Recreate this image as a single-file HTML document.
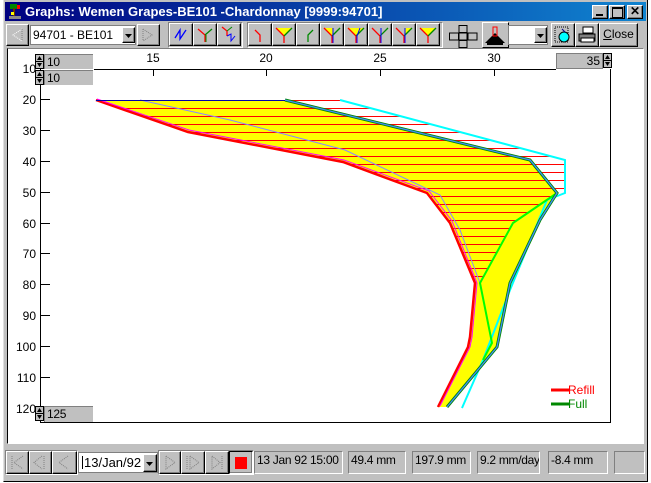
<!DOCTYPE html>
<html><head><style>
body{margin:0;width:651px;height:483px;overflow:hidden;background:#fff;font-family:"Liberation Sans",sans-serif;font-size:12px;position:relative}
.a{position:absolute}
.win{left:3px;top:0;width:645px;height:482px;background:#c0c0c0;border-right:1px solid #000;border-bottom:1px solid #000;box-sizing:border-box;border-left:1px solid #dfdfdf}
.title{left:5px;top:2px;width:641px;height:19px;background:linear-gradient(90deg,#000080,#1084d0);color:#fff;font-weight:bold;font-size:13px;line-height:19px}
.btn{position:absolute;background:#c0c0c0;border:1px solid;border-color:#fff #000 #000 #fff;box-shadow:inset -1px -1px #808080;box-sizing:border-box}
.sunk{position:absolute;border:1px solid;border-color:#808080 #fff #fff #808080;box-sizing:border-box}
.tb{font-size:12px;line-height:14px;padding-left:2px;white-space:nowrap;overflow:hidden;letter-spacing:-0.3px}
</style></head><body>
<div class="a win"></div>
<div class="a title"><span style="position:absolute;left:20px;top:0">Graphs: Wemen Grapes-BE101 -Chardonnay [9999:94701]</span>
<svg class="a" style="left:2px;top:1px" width="16" height="17"><rect x="3" y="1" width="7" height="5" fill="#080"/><rect x="6" y="5" width="2" height="9" fill="#630"/><rect x="10" y="2" width="3" height="4" fill="#f00"/><rect x="2" y="13" width="12" height="3" fill="#888"/><rect x="4" y="9" width="3" height="3" fill="#ff0"/></svg>
</div>
<div class="btn" style="left:592px;top:5px;width:16px;height:14px"><div class="a" style="left:3px;top:8px;width:7px;height:2px;background:#000"></div></div>
<div class="btn" style="left:609px;top:5px;width:16px;height:14px"><div class="a" style="left:2px;top:1px;width:9px;height:8px;border:1px solid #000;border-top-width:2px"></div></div>
<div class="btn" style="left:627px;top:5px;width:16px;height:14px;font-weight:bold;font-size:12px;line-height:11px;text-align:center">✕</div>

<!-- toolbar -->
<div class="btn" style="left:6px;top:24px;width:23px;height:22px"><svg width="21" height="20"><path d="M15 4 L6 10 L15 16" fill="none" stroke="#fff" stroke-dasharray="1 1"/><path d="M15 4 V16" stroke="#808080" stroke-dasharray="1 1"/></svg></div>
<div class="a" style="left:30px;top:25px;width:106px;height:20px;background:#fff;border:1px solid #808080;box-sizing:border-box;line-height:18px;padding-left:2px">94701 - BE101</div>
<div class="btn" style="left:122px;top:27px;width:13px;height:16px"><svg width="11" height="14"><path d="M2 6 h7 l-3.5 4z" fill="#000"/></svg></div>
<div class="btn" style="left:137px;top:24px;width:23px;height:22px"><svg width="21" height="20"><path d="M5 4 L14 10 L5 16 M5 4V16" fill="none" stroke="#808080" stroke-dasharray="1 1"/></svg></div>

<div class="sunk" style="left:168px;top:22px;width:75px;height:26px"></div>
<div class="btn" style="left:169px;top:23px;width:24px;height:23px"><svg width="22" height="21"><path d="M5 14 L10 6 V15 L16 6" fill="none" stroke="#00f" stroke-width="1.3"/></svg></div>
<div class="btn" style="left:193px;top:23px;width:24px;height:23px"><svg width="22" height="21"><path d="M4 5 L11 11 V18" stroke="#f00" fill="none" stroke-width="1.3"/><path d="M18 5 L11 11" stroke="#080" stroke-width="1.3"/><path d="M12 11 V18" stroke="#080"/></svg></div>
<div class="btn" style="left:217px;top:23px;width:24px;height:23px"><svg width="22" height="21"><path d="M4 3 L9 7 V12" stroke="#f00" fill="none" stroke-width="1.3"/><path d="M14 3 L9 7" stroke="#080"/><path d="M9 12 L13 10 V17 L17 12" stroke="#00f" fill="none"/></svg></div>

<div class="sunk" style="left:247px;top:22px;width:196px;height:26px"></div>
<div class="btn" style="left:248px;top:23px;width:24px;height:23px"><svg width="22" height="21"><path d="M6 6 L11 11 V18" stroke="#f00" fill="none" stroke-width="1.3"/></svg></div>
<div class="btn" style="left:272px;top:23px;width:24px;height:23px"><svg width="22" height="21"><path d="M3 4 H19 L11 12z" fill="#ff0"/><path d="M3 4 L11 12 V19" stroke="#f00" fill="none" stroke-width="1.3"/><path d="M19 4 L11 12" stroke="#080" stroke-width="1.3"/></svg></div>
<div class="btn" style="left:296px;top:23px;width:24px;height:23px"><svg width="22" height="21"><path d="M16 6 L11 11 V18" stroke="#080" fill="none" stroke-width="1.3"/></svg></div>
<div class="btn" style="left:320px;top:23px;width:24px;height:23px"><svg width="22" height="21"><path d="M3 4 H12 L11 12z" fill="#ff0"/><path d="M3 4 L11 12 V19" stroke="#f00" fill="none" stroke-width="1.3"/><path d="M19 4 L11 12" stroke="#080" stroke-width="1.3"/><path d="M12 4V19" stroke="#00f"/></svg></div>
<div class="btn" style="left:344px;top:23px;width:24px;height:23px"><svg width="22" height="21"><path d="M3 4 H19 L11 12z" fill="#ff0"/><path d="M3 4 L11 12 V19" stroke="#f00" fill="none" stroke-width="1.3"/><path d="M19 4 L11 12" stroke="#080" stroke-width="1.3"/><path d="M15 4 L12 12V19" stroke="#00f" fill="none"/></svg></div>
<div class="btn" style="left:368px;top:23px;width:24px;height:23px"><svg width="22" height="21"><path d="M3 4 L11 12 V19" stroke="#f00" fill="none" stroke-width="1.3"/><path d="M19 4 L11 12" stroke="#080" stroke-width="1.3"/><path d="M12 4V19" stroke="#00f"/></svg></div>
<div class="btn" style="left:392px;top:23px;width:24px;height:23px"><svg width="22" height="21"><path d="M12 4 H19 L12 11z" fill="#ff0"/><path d="M3 4 L11 12 V19" stroke="#f00" fill="none" stroke-width="1.3"/><path d="M19 4 L11 12" stroke="#080" stroke-width="1.3"/><path d="M12 4V19" stroke="#00f"/></svg></div>
<div class="btn" style="left:416px;top:23px;width:24px;height:23px"><svg width="22" height="21"><path d="M3 4 H19 L11 12z" fill="#ff0"/><path d="M3 4 L11 12 V19" stroke="#f00" fill="none" stroke-width="1.3"/><path d="M19 4 L11 12" stroke="#080" stroke-width="1.3"/></svg></div>

<svg class="a" style="left:449px;top:25px" width="29" height="23"><g fill="#c0c0c0" stroke="#000"><rect x="10" y="0.5" width="8" height="7"/><rect x="0.5" y="8" width="9" height="7"/><rect x="19" y="8" width="9" height="7"/><rect x="10" y="15.5" width="8" height="7"/><rect x="10" y="8" width="8" height="7"/></g></svg>
<div class="sunk" style="left:482px;top:22px;width:27px;height:26px;border-color:#fff #000 #000 #fff"><svg width="25" height="24"><path d="M2 20 L12 10 L22 20z" fill="#000"/><rect x="4" y="18" width="16" height="4" fill="#000"/><rect x="10" y="4" width="4" height="9" fill="none" stroke="#f00"/></svg></div>
<div class="a" style="left:508px;top:25px;width:40px;height:20px;background:#fff;border:1px solid #808080;box-sizing:border-box"></div>
<div class="btn" style="left:534px;top:27px;width:13px;height:16px"><svg width="11" height="14"><path d="M2 6 h7 l-3.5 4z" fill="#000"/></svg></div>
<div class="btn" style="left:551px;top:23px;width:24px;height:24px"><svg width="22" height="22"><rect x="3" y="3" width="13" height="15" fill="none" stroke="#000" stroke-dasharray="1 1"/><circle cx="12" cy="13" r="5" fill="#0ff" stroke="#000"/><path d="M10 5 l3 3" stroke="#008"/></svg></div>
<div class="btn" style="left:575px;top:23px;width:24px;height:24px"><svg width="22" height="22"><rect x="7" y="3" width="10" height="6" fill="#fff" stroke="#000"/><path d="M3 10 H19 V17 H3z" fill="#808080" stroke="#000"/><rect x="5" y="14" width="13" height="4" fill="#fff" stroke="#000"/></svg></div>
<div class="btn" style="left:599px;top:23px;width:39px;height:24px;text-align:center;line-height:21px;font-size:12px"><u>C</u>lose</div>

<!-- plot area -->
<div class="a" style="left:7px;top:48px;width:637px;height:396px;background:#fff;border:1px solid;border-color:#808080 #fff #fff #000;box-sizing:border-box"></div>
<svg class="a" style="left:0;top:0" width="651" height="483" font-family="Liberation Sans" font-size="12">
<g stroke="#000" fill="none">
<path d="M40.5 69 V422.5 H610.5 V69"/>
<path d="M94 69.5 H556"/>
<path d="M153.5 69 v7 M266.5 69 v7 M380.5 69 v7 M494.5 69 v7"/>
</g>
<g stroke="#000"><path d="M40 99.5h10M40 130.5h10M40 161.5h10M40 192.5h10M40 223.5h10M40 253.5h10M40 284.5h10M40 315.5h10M40 346.5h10M40 377.5h10M40 408.5h10"/></g>
<g text-anchor="end" fill="#000">
<text x="36" y="73">10</text><text x="36" y="104">20</text><text x="36" y="135">30</text><text x="36" y="166">40</text><text x="36" y="197">50</text><text x="36" y="228">60</text><text x="36" y="258">70</text><text x="36" y="289">80</text><text x="36" y="320">90</text><text x="36" y="351">100</text><text x="36" y="382">110</text><text x="36" y="413">120</text>
</g>
<g text-anchor="middle"><text x="153" y="62">15</text><text x="266" y="62">20</text><text x="380" y="62">25</text><text x="494" y="62">30</text></g>
<defs><clipPath id="c"><path d="M96 100 L188 132 L343 162 L427 193 L450 223 L475 283 L480 283 L513 223 L557 193 L565 193 L565 160 L340 100z"/></clipPath></defs>
<path d="M96 100 L188 132 L343 162 L427 193 L450 223 L475 283 L470 337 L468 347 L438 407 L447 407 L497 347 L510 283 L540 220 L557 193 L530 160 L285 100z" fill="#ff0"/>
<g clip-path="url(#c)" stroke="#f00" stroke-width="1"><path d="M80 100.5H570M80 108.5H570M80 116.5H570M80 124.5H570M80 132.5H570M80 140.5H570M80 148.5H570M80 156.5H570M80 164.5H570M80 172.5H570M80 180.5H570M80 188.5H570M80 196.5H570M80 204.5H570M80 212.5H570M80 220.5H570M80 228.5H570M80 236.5H570M80 244.5H570M80 252.5H570M80 260.5H570M80 268.5H570M80 276.5H570"/></g>
<path d="M140 100 L230 120 L345 150 L440 195 L460 230 L480 283 L492 343 L483 360 L462 408" fill="none" stroke="#88f" stroke-width="1"/>
<path d="M340 100 L565 160 L565 193 L547 200 L510 290 L483 360 L462 408" fill="none" stroke="#0ff" stroke-width="2"/>
<path d="M557 193 L513 223 L480 283 L492 343 L483 360" fill="none" stroke="#0f0" stroke-width="2"/>
<path d="M285 100 L530 160 L557 193 L540 220 L510 283 L497 347 L447 407" fill="none" stroke="#080" stroke-width="3"/>
<path d="M285 100 L530 160 L557 193 L540 220 L510 283 L497 347 L447 407" fill="none" stroke="#48f" stroke-width="1.3"/>
<path d="M96 100 L188 132 L343 162 L427 193 L450 223 L475 283 L470 337 L468 347 L438 407" fill="none" stroke="#f00" stroke-width="2.5"/>
<path d="M97 99 L189 130 L344 160 L429 191 L452 221 L477 283 L472 337 L470 347 L440 406" fill="none" stroke="#f0f" stroke-width="1"/>
<path d="M96 100.5 H285" stroke="#00a" stroke-width="1"/>
<path d="M551 390h18" stroke="#f00" stroke-width="3"/><text x="568" y="394" fill="#f00">Refill</text>
<path d="M551 404h18" stroke="#080" stroke-width="3"/><text x="568" y="408" fill="#080">Full</text>
</svg>
<!-- axis boxes -->
<div class="a" style="left:44px;top:54px;width:49px;height:15px;background:#c0c0c0;border-top:1px solid #808080;border-left:1px solid #808080;box-sizing:border-box" ><span class="tb">10</span></div>
<div class="a" style="left:44px;top:70px;width:49px;height:15px;background:#c0c0c0;border-top:1px solid #808080;border-left:1px solid #808080;box-sizing:border-box" ><span class="tb">10</span></div>
<div class="a" style="left:44px;top:406px;width:49px;height:16px;background:#c0c0c0;border-top:1px solid #808080;border-left:1px solid #808080;box-sizing:border-box" ><span class="tb">125</span></div>
<div class="a" style="left:556px;top:53px;width:47px;height:16px;background:#c0c0c0;border:1px solid #808080;box-sizing:border-box;text-align:right;padding-right:2px;line-height:14px">35</div>
<svg class="a" style="left:35px;top:54px" width="9" height="32"><g fill="#c0c0c0" stroke="#000"><rect x=".5" y=".5" width="8" height="7"/><rect x=".5" y="7.5" width="8" height="7"/><rect x=".5" y="16.5" width="8" height="7"/><rect x=".5" y="23.5" width="8" height="7"/></g><path d="M2 6l2.5-4 2.5 4zM2 9l2.5 4 2.5-4zM2 22l2.5-4 2.5 4zM2 25l2.5 4 2.5-4z"/></svg>
<svg class="a" style="left:35px;top:406px" width="9" height="16"><g fill="#c0c0c0" stroke="#000"><rect x=".5" y=".5" width="8" height="7"/><rect x=".5" y="7.5" width="8" height="7"/></g><path d="M2 6l2.5-4 2.5 4zM2 9l2.5 4 2.5-4z"/></svg>
<svg class="a" style="left:603px;top:53px" width="9" height="16"><g fill="#c0c0c0" stroke="#000"><rect x=".5" y=".5" width="8" height="7"/><rect x=".5" y="7.5" width="8" height="7"/></g><path d="M2 6l2.5-4 2.5 4zM2 9l2.5 4 2.5-4z"/></svg>

<!-- bottom bar -->
<div class="sunk" style="left:5px;top:450px;width:73px;height:25px"></div>
<div class="btn" style="left:6px;top:451px;width:23px;height:23px"><svg width="21" height="21"><path d="M5 4V17 M16 4 L7 10.5 L16 17" fill="none" stroke="#808080" stroke-dasharray="1 1"/></svg></div>
<div class="btn" style="left:29px;top:451px;width:23px;height:23px"><svg width="21" height="21"><path d="M14 4V17 M12 4 L4 10.5 L12 17" fill="none" stroke="#808080" stroke-dasharray="1 1"/></svg></div>
<div class="btn" style="left:52px;top:451px;width:25px;height:23px"><svg width="21" height="21"><path d="M15 4 L6 10.5 L15 17" fill="none" stroke="#808080" stroke-dasharray="1 1"/></svg></div>
<div class="a" style="left:78px;top:452px;width:80px;height:21px;background:#fff;border:1px solid #808080;box-sizing:border-box;font-size:13px;line-height:19px;padding-left:5px">13/Jan/92</div>
<div class="a" style="left:82px;top:456px;width:1px;height:13px;background:#000"></div>
<div class="btn" style="left:143px;top:454px;width:14px;height:18px"><svg width="12" height="16"><path d="M2 7 h7 l-3.5 4z"/></svg></div>
<div class="sunk" style="left:158px;top:450px;width:96px;height:25px"></div>
<div class="btn" style="left:159px;top:451px;width:22px;height:23px"><svg width="20" height="21"><path d="M6 4 L15 10.5 L6 17z" fill="none" stroke="#808080" stroke-dasharray="1 1"/></svg></div>
<div class="btn" style="left:181px;top:451px;width:24px;height:23px"><svg width="22" height="21"><path d="M5 4V17 M8 4 L17 10.5 L8 17z" fill="none" stroke="#808080" stroke-dasharray="1 1"/></svg></div>
<div class="btn" style="left:205px;top:451px;width:24px;height:23px"><svg width="22" height="21"><path d="M16 4V17 M6 4 L14 10.5 L6 17z" fill="none" stroke="#808080" stroke-dasharray="1 1"/></svg></div>
<div class="btn" style="left:229px;top:451px;width:24px;height:23px;border-color:#000 #fff #fff #000"><div class="a" style="left:5px;top:5px;width:12px;height:12px;background:#f00"></div></div>
<div class="sunk tb" style="left:254px;top:451px;width:89px;height:23px;line-height:16px">13 Jan 92 15:00</div>
<div class="sunk tb" style="left:348px;top:451px;width:58px;height:23px;line-height:16px">49.4 mm</div>
<div class="sunk tb" style="left:412px;top:451px;width:59px;height:23px;line-height:16px">197.9 mm</div>
<div class="sunk tb" style="left:477px;top:451px;width:63px;height:23px;line-height:16px">9.2 mm/day</div>
<div class="sunk tb" style="left:548px;top:451px;width:60px;height:23px;line-height:16px">-8.4 mm</div>
<div class="sunk" style="left:614px;top:451px;width:31px;height:23px"></div>
</body></html>
